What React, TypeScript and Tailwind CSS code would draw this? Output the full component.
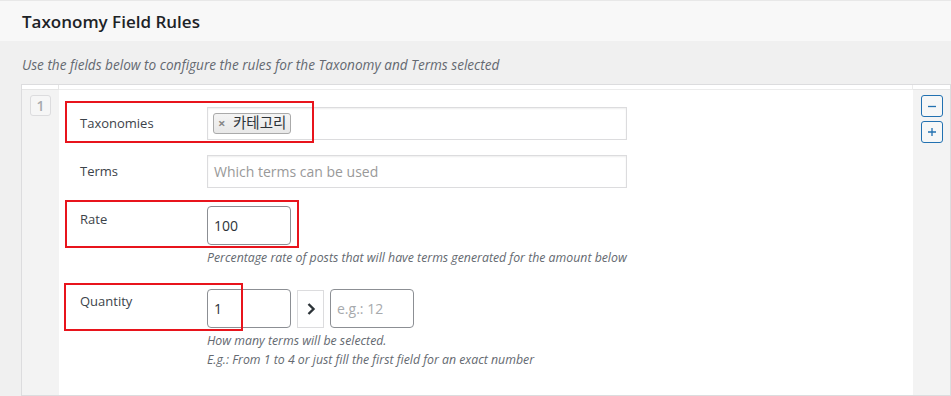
import React from "react";

const font = { fontFamily: '"Open Sans", "Noto Sans CJK KR", sans-serif' };

function RedBox({ className }: { className: string }) {
  return <div className={`absolute border-2 border-[#e8141c] pointer-events-none ${className}`} />;
}

export default function App() {
  return (
    <div className="relative w-[951px] h-[396px] overflow-hidden bg-[#f0f0f0]" style={font}>
      <div className="h-[41px] bg-[#f8f8f8] border-t border-[#e8e8e8] flex items-center px-[22px]">
        <h2 className="text-[17px] font-semibold text-[#1d2327] leading-none">Taxonomy Field Rules</h2>
      </div>
      <p className="h-[43px] px-[22px] pt-[15px] text-[13.6px] italic text-[#646970] leading-[18px]">
        Use the fields below to configure the rules for the Taxonomy and Terms selected
      </p>
      <div className="ml-[21px] w-[930px] h-[312px] border border-[#dcdcde] grid grid-cols-[37px_1fr_37px] grid-rows-[5px_1fr]">
        <div className="bg-white border-b border-r border-[#e5e5e5]" />
        <div className="bg-white border-b border-r border-[#ececec]" />
        <div className="bg-white border-b border-[#e5e5e5]" />

        <div className="bg-[#f3f3f3] flex justify-center pt-[5px]">
          <div className="w-[21px] h-[21px] border border-[#dcdcde] rounded-[3px] bg-[#f6f6f6] flex items-center justify-center text-[14px] font-semibold text-[#a7aaad]">
            1
          </div>
        </div>

        <div className="bg-white pl-[21px] pt-[17px] text-[13px] text-[#3c434a]">
          <div className="flex items-center">
            <div className="w-[127px]">Taxonomies</div>
            <div className="w-[420px] h-[33px] border border-[#dcdcde] shadow-[inset_0_1px_2px_rgba(0,0,0,0.07)] bg-white flex items-center px-[5px]">
              <span className="h-[21px] pl-[4px] pr-[4px] flex items-center border border-[#aaa] rounded-[3px] bg-gradient-to-b from-[#f4f4f4] to-[#e8e8e8] text-[14.5px] text-[#2c3338]">
                <span className="w-[6px] text-[13px] font-bold text-[#888] leading-none">×</span>
                <span className="ml-[9px] leading-none">카테고리</span>
              </span>
            </div>
          </div>

          <div className="flex items-center mt-[15px]">
            <div className="w-[127px]">Terms</div>
            <div className="w-[420px] h-[33px] border border-[#dcdcde] shadow-[inset_0_1px_2px_rgba(0,0,0,0.07)] bg-white flex items-center px-[6px] text-[14px] text-[#999]">
              Which terms can be used
            </div>
          </div>

          <div className="flex items-start mt-[18px]">
            <div className="w-[127px] pt-[4px]">Rate</div>
            <div>
              <div className="w-[84px] h-[39px] border border-[#8c8f94] rounded-[4px] bg-white flex items-center px-[6px] text-[14px] text-[#2c3338]">
                100
              </div>
              <div className="mt-[5px] text-[12.3px] italic text-[#646970] leading-[16px]">
                Percentage rate of posts that will have terms generated for the amount below
              </div>
            </div>
          </div>

          <div className="flex items-start mt-[23px]">
            <div className="w-[127px] pt-[3px]">Quantity</div>
            <div>
              <div className="flex items-center gap-[6px]">
                <div className="w-[84px] h-[39px] border border-[#8c8f94] rounded-[4px] bg-white flex items-center px-[6px] text-[14px] text-[#2c3338]">
                  1
                </div>
                <div className="w-[27px] h-[38px] border border-[#dcdcde] bg-white flex items-center justify-center">
                  <svg width="10" height="14" viewBox="0 0 10 14">
                    <path d="M2.5 2 L7.5 7 L2.5 12" fill="none" stroke="#2c3338" strokeWidth="2.4" />
                  </svg>
                </div>
                <div className="w-[84px] h-[39px] border border-[#8c8f94] rounded-[4px] bg-white flex items-center px-[6px] text-[14px] text-[#a7aaad]">
                  e.g.: 12
                </div>
              </div>
              <div className="mt-[3px] text-[12.3px] italic text-[#646970] leading-[19px]">
                <div>How many terms will be selected.</div>
                <div>E.g.: From 1 to 4 or just fill the first field for an exact number</div>
              </div>
            </div>
          </div>
        </div>

        <div className="bg-[#f3f3f3] flex flex-col items-center pt-[5px] gap-[4px]">
          <div className="w-[22px] h-[22px] border border-[#2271b1] rounded-[3px] bg-[#f6f7f7] flex items-center justify-center">
            <svg width="10" height="10" viewBox="0 0 10 10">
              <path d="M1 5.5 H9" stroke="#2271b1" strokeWidth="1.3" />
            </svg>
          </div>
          <div className="w-[22px] h-[22px] border border-[#2271b1] rounded-[3px] bg-[#f6f7f7] flex items-center justify-center">
            <svg width="10" height="10" viewBox="0 0 10 10">
              <path d="M1 5 H9 M5 1 V9" stroke="#2271b1" strokeWidth="1.3" />
            </svg>
          </div>
        </div>
      </div>

      <RedBox className="left-[65px] top-[101px] w-[249px] h-[42px]" />
      <RedBox className="left-[65px] top-[200px] w-[234px] h-[48px]" />
      <RedBox className="left-[64px] top-[283px] w-[179px] h-[48px]" />
    </div>
  );
}
